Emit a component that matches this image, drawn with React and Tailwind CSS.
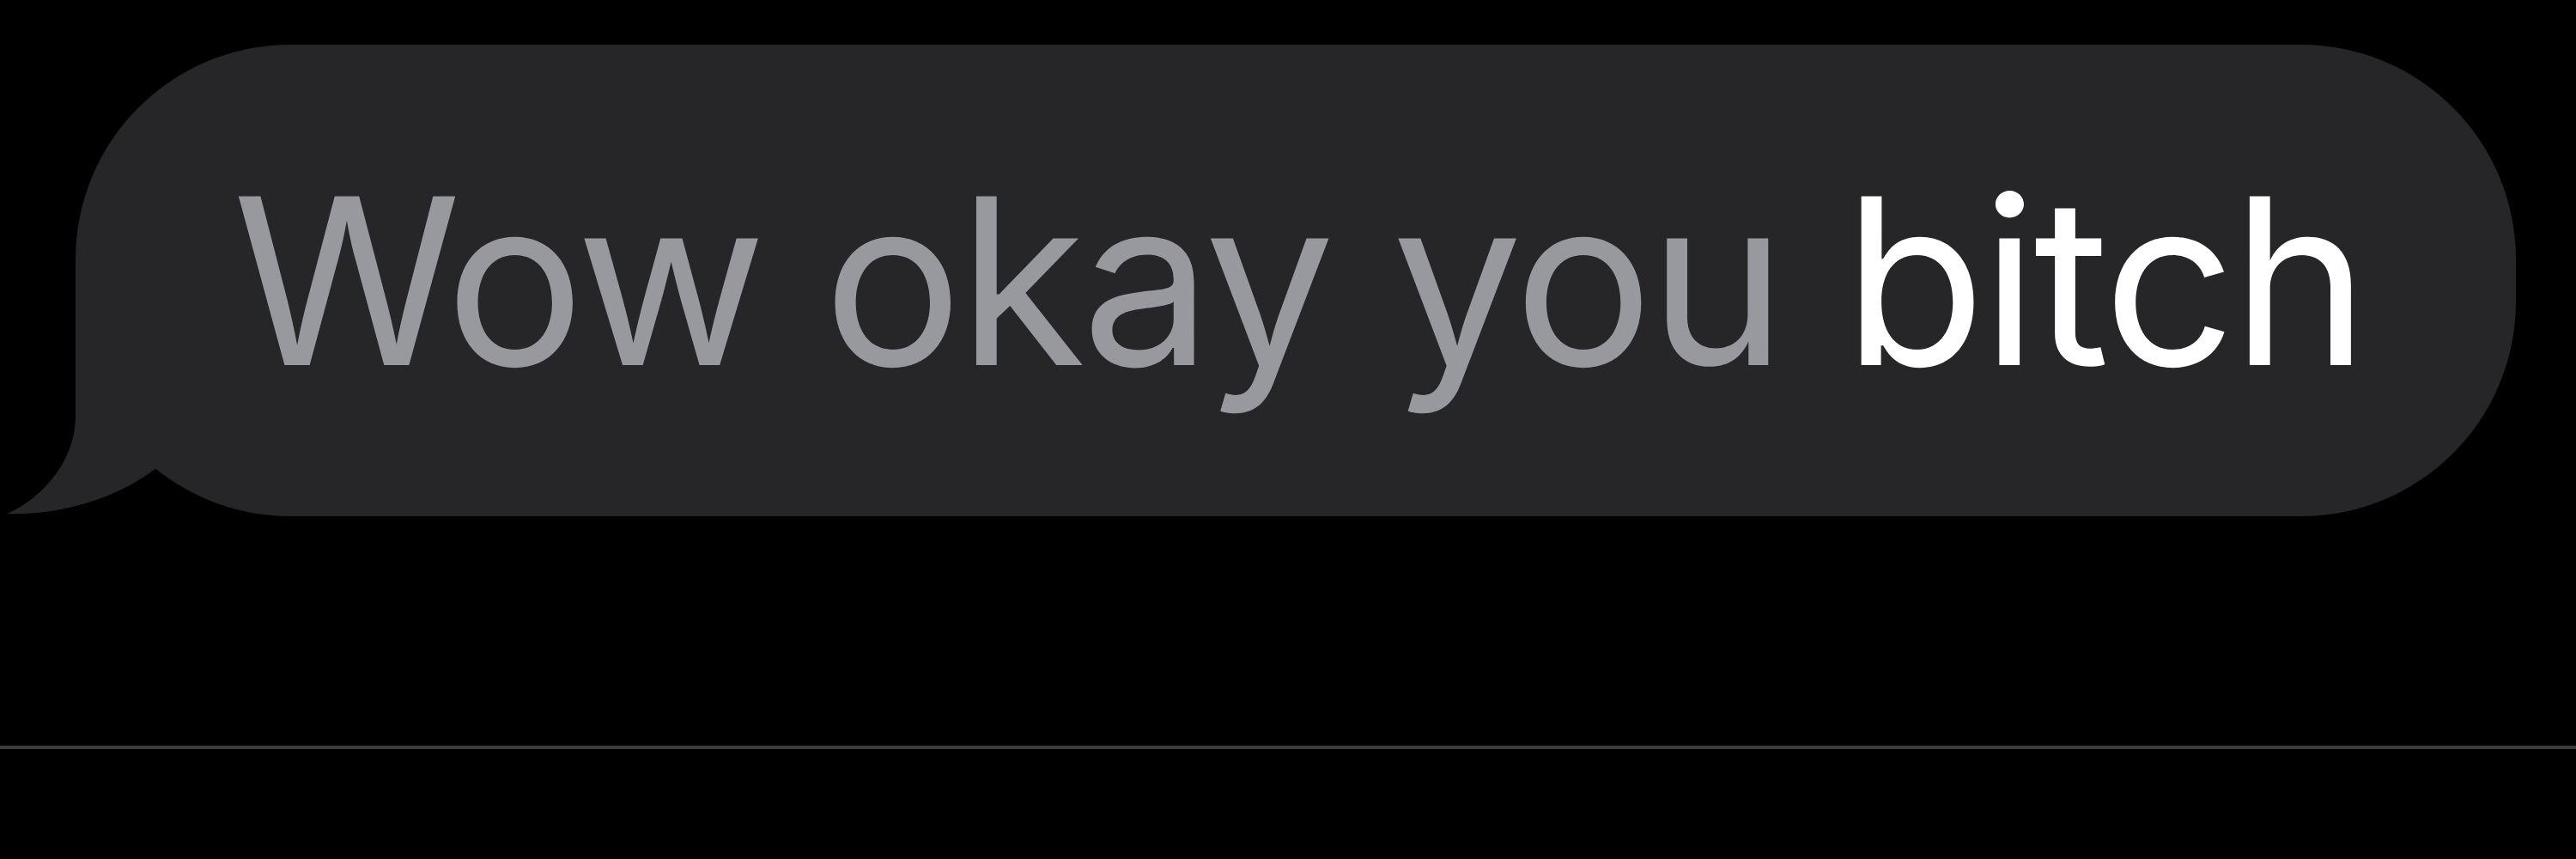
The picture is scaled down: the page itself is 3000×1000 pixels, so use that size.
export default function App() {
  return (
    <div className="w-[3000px] h-[1000px] bg-black flex flex-col overflow-hidden">
      {/* incoming message row */}
      <div className="flex pt-[52px] pl-[88px]">
        <div className="relative">
          {/* bubble tail */}
          <svg
            className="absolute -left-[88px] top-[299px] w-[220px] h-[250px]"
            viewBox="0 351 220 250"
            aria-hidden="true"
          >
            <path
              d="M88 351 L88 487 C86 545 40 585 8 598 C60 600 130 585 182 545 L210 430 L210 351 Z"
              fill="#262628"
            />
          </svg>
          <div className="relative h-[549px] rounded-[250px] bg-[#262628] flex items-center pl-[183px] pr-[176px]">
            <p
              className="text-[270px] leading-none whitespace-nowrap tracking-[-4.6px]"
              style={{ fontFamily: "Inter, 'Noto Sans', sans-serif" }}
            >
              <span className="text-[#98989f]">Wow okay you </span>
              <span className="text-white">bitch</span>
            </p>
          </div>
        </div>
      </div>
      {/* divider */}
      <div className="mt-[267px] h-[4px] bg-[#3a3a3c]" />
    </div>
  );
}
